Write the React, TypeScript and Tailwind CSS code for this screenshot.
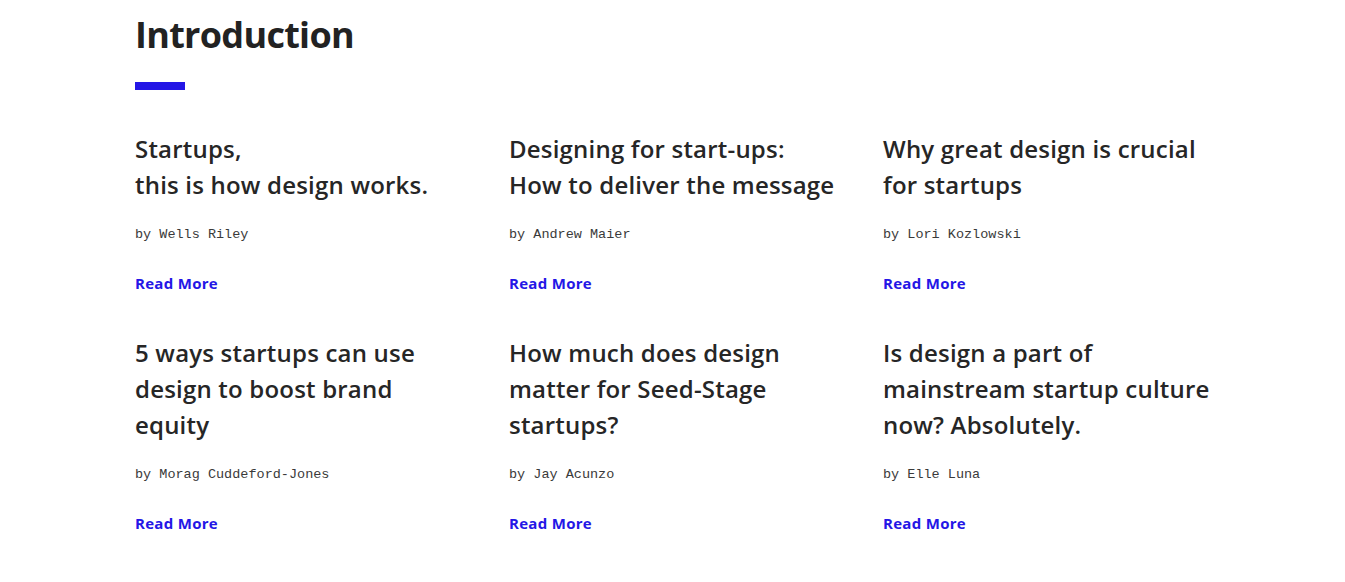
import React from "react"

type Post = {
  title: string[]
  author: string
}

const posts: Post[] = [
  { title: ["Startups,", "this is how design works."], author: "Wells Riley" },
  { title: ["Designing for start-ups:", "How to deliver the message"], author: "Andrew Maier" },
  { title: ["Why great design is crucial", "for startups"], author: "Lori Kozlowski" },
  { title: ["5 ways startups can use", "design to boost brand", "equity"], author: "Morag Cuddeford-Jones" },
  { title: ["How much does design", "matter for Seed-Stage", "startups?"], author: "Jay Acunzo" },
  { title: ["Is design a part of", "mainstream startup culture", "now? Absolutely."], author: "Elle Luna" },
]

const heading = "font-['Open_Sans','Noto_Sans',sans-serif]"

function PostCard({ post }: { post: Post }) {
  return (
    <div className="flex flex-col items-start">
      <h3 className={`${heading} text-[24px] font-semibold leading-[36px] tracking-[0.2px] text-[#262626]`}>
        {post.title.map((line, i) => (
          <span key={i} className="block whitespace-nowrap">
            {line}
          </span>
        ))}
      </h3>
      <p className="mt-[22px] font-['Liberation_Mono','DejaVu_Sans_Mono',monospace] text-[13.5px] leading-[20px] text-[#3a3a3a]">
        by {post.author}
      </p>
      <a href="#" className={`${heading} mt-[28px] text-[15px] font-bold leading-[20px] tracking-[0.3px] text-[#2416e6]`}>
        Read More
      </a>
    </div>
  )
}

export default function App() {
  return (
    <main className="min-h-screen bg-white">
      <section className="ml-[135px] w-[1122px] pt-[13px]">
        <h1 className={`${heading} text-[36px] font-bold leading-[44px] tracking-[-0.7px] text-[#222]`}>
          Introduction
        </h1>
        <div className="mt-[25px] h-[8px] w-[50px] bg-[#2416e6]" />
        <div className="mt-[41px] grid grid-cols-3 gap-y-[42px]">
          {posts.map((post) => (
            <PostCard key={post.author} post={post} />
          ))}
        </div>
      </section>
    </main>
  )
}
